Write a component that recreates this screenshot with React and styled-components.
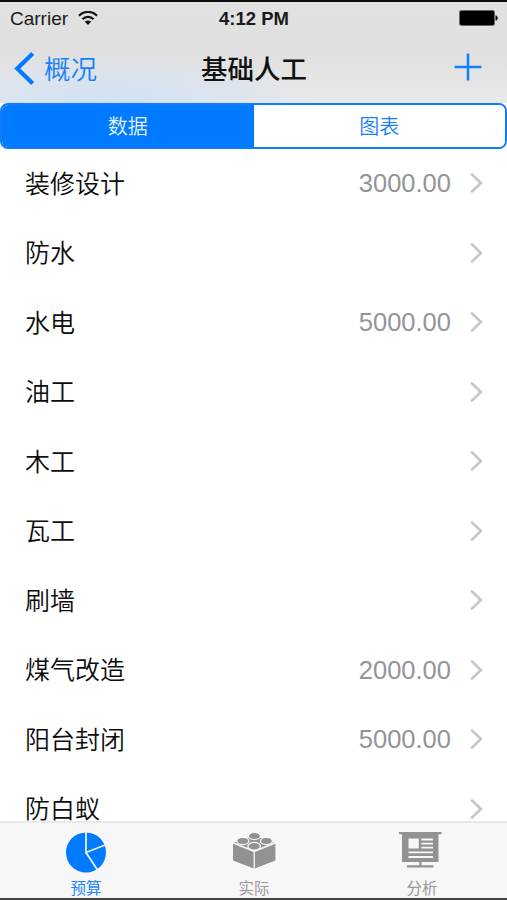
import React, { useState } from "react";
import styled, { createGlobalStyle } from "styled-components";

const GlobalStyle = createGlobalStyle`
  * {
    box-sizing: border-box;
  }

  body {
    margin: 0;
    background: #fff;
    font-family: "Liberation Sans", "Noto Sans CJK SC", sans-serif;
  }

  button {
    font-family: inherit;
    border: none;
    background: none;
    padding: 0;
    cursor: pointer;
  }
`;

const Screen = styled.div`
  width: 507px;
  height: 900px;
  display: flex;
  flex-direction: column;
  overflow: hidden;
  background: #fff;
  border-top: 2px solid #0c0c0c;
  border-bottom: 2px solid #444;
`;

const Header = styled.header`
  flex: none;
  height: 101px;
  background: radial-gradient(ellipse 210px 50px at 110px 101px, #cfe1f6 0%, rgba(207, 225, 246, 0) 100%),
    linear-gradient(#e1e1e1 0%, #e0e0e0 50%, #e9e9eb 100%);
`;

const StatusBar = styled.div`
  height: 33px;
  padding: 1px 9px 0 10px;
  display: grid;
  grid-template-columns: 1fr auto 1fr;
  align-items: center;
  font-size: 19px;
  line-height: 32px;
  color: #1a1a1a;
`;

const Carrier = styled.div`
  display: flex;
  align-items: center;
  gap: 10px;
`;

const Time = styled.div`
  font-size: 18.5px;
  font-weight: bold;
`;

const BatterySlot = styled.div`
  display: flex;
  justify-content: flex-end;
  margin-bottom: 2px;
`;

const NavBar = styled.div`
  height: 66px;
  padding: 0 25px 0 14px;
  display: grid;
  grid-template-columns: 1fr auto 1fr;
  align-items: center;
`;

const BackButton = styled.button`
  display: flex;
  align-items: center;
  gap: 9px;
  font-size: 26.5px;
  line-height: 40px;
  font-weight: 350;
  color: #1580fb;

  span {
    padding-top: 3px;
  }
`;

const Title = styled.h1`
  margin: 0 0 0 12px;
  padding-top: 4px;
  font-size: 26.5px;
  line-height: 40px;
  font-weight: 500;
  color: #111;
`;

const AddButton = styled.button`
  justify-self: end;
  display: flex;
  margin-bottom: 3px;
`;

const Segments = styled.div`
  flex: none;
  height: 46px;
  display: flex;
  border: 2px solid #0e7dfb;
  border-radius: 8px;
  overflow: hidden;
  background: #fff;
`;

const Segment = styled.button`
  flex: 1;
  padding-top: 2px;
  font-size: 20px;
  line-height: 40px;
  font-weight: 350;
  color: ${(props) => (props.$active ? "#e4f1ff" : "#1580fb")};
  background: ${(props) => (props.$active ? "#007aff" : "#fff")};
`;

const List = styled.ul`
  flex: 1;
  min-height: 0;
  margin: 0;
  padding: 0;
  list-style: none;
  overflow: hidden;
`;

const Row = styled.li`
  height: 69.5px;
  padding: 0 24px 1px 25px;
  display: flex;
  align-items: center;
`;

const Name = styled.span`
  flex: 1;
  padding-top: 1px;
  font-size: 25px;
  line-height: 36px;
  font-weight: 350;
  color: #0c0c0c;
`;

const Amount = styled.span`
  margin-right: 19px;
  font-size: 25.5px;
  line-height: 36px;
  color: #949498;
`;

const TabBar = styled.nav`
  flex: none;
  height: 77px;
  display: flex;
  justify-content: space-between;
  padding: 0 1px 0 2px;
  border-top: 2px solid #e9e9e9;
  background: #f7f7f7;
`;

const Tab = styled.button`
  width: 168px;
  display: flex;
  flex-direction: column;
  align-items: center;
  padding-top: 9px;
  font-size: 15.5px;
  line-height: 18px;
  color: ${(props) => (props.$active ? "#1d86fb" : "#989898")};
`;

const TabIcon = styled.span`
  height: 48px;
  display: flex;
`;

const WifiIcon = () => (
  <svg width="20" height="16" viewBox="0 0 20 16" fill="none" stroke="#111" strokeWidth="2.3">
    <path d="M1 4.7a12.7 12.7 0 0 1 18 0" />
    <path d="M4.5 8.2a7.8 7.8 0 0 1 11 0" />
    <path d="M10 14l-3.2-3.3a4.6 4.6 0 0 1 6.4 0z" fill="#111" stroke="none" />
  </svg>
);

const BatteryIcon = () => (
  <svg width="39" height="16" viewBox="0 0 39 16">
    <rect x="0.5" y="0.5" width="35" height="15" rx="2" fill="#000" stroke="#666" strokeWidth="1" />
    <path d="M36.5 5.2c3 .6 3 5 0 5.6z" fill="#111" />
  </svg>
);

const BackIcon = () => (
  <svg width="21" height="33" viewBox="0 0 21 33" fill="none" stroke="#007aff" strokeWidth="4.2">
    <path d="M18.7 1.6L3.3 16.5l15.4 14.9" />
  </svg>
);

const PlusIcon = () => (
  <svg width="28" height="28" viewBox="0 0 28 28" stroke="#1580fb" strokeWidth="2.6">
    <path d="M14 0.5v27M0.5 14h27" />
  </svg>
);

const ChevronIcon = () => (
  <svg width="13" height="22" viewBox="0 0 13 22" fill="none" stroke="#c6c6cb" strokeWidth="2.7">
    <path d="M1.2 1.6l9.7 9.4-9.7 9.4" />
  </svg>
);

const PieIcon = () => (
  <svg width="40" height="41" viewBox="0 0 40 41">
    <circle cx="20" cy="20.5" r="20" fill="#007aff" />
    <path d="M20 0v20.5L39 13M20 20.5L31.5 38" fill="none" stroke="#e6f2ff" strokeWidth="1.8" />
  </svg>
);

const BrickIcon = () => (
  <svg width="44" height="37" viewBox="0 0 44 37" fill="#929292">
    <path d="M1 11.8L21.6 20V36.4L1 28.4z" />
    <path d="M43.4 11.8L22.9 20V36.4L43.4 28.4z" />
    <path d="M2.4 10.6L22.2 3.6l19.8 7-19.8 8z" />
    <g stroke="#f7f7f7" strokeWidth="1.3">
      <ellipse cx="22.3" cy="4" rx="6" ry="3.6" />
      <ellipse cx="10.8" cy="9" rx="6" ry="3.6" />
      <ellipse cx="34.4" cy="9" rx="6" ry="3.6" />
      <ellipse cx="22.2" cy="14.2" rx="6.3" ry="3.9" />
    </g>
  </svg>
);

const BoardIcon = () => (
  <svg width="46" height="37" viewBox="0 0 46 37" fill="#929292">
    <path d="M0 0h42.5v2.3H0zM3 2h36.5v28H3zM20.3 30h2.2v4h-2.2zM8 33.2h26.5v2.2H8z" />
    <path
      d="M9.5 6.5h10.3v10H9.5zM22.3 6.5H34v2H22.3zM22.3 10.7H34v1.8H22.3zM22.3 14.7H34v1.8H22.3zM9.5 19.4H34v1.8H9.5zM9.5 24H34v2H9.5z"
      fill="#f7f7f7"
    />
  </svg>
);

const items = [
  { name: "装修设计", amount: "3000.00" },
  { name: "防水" },
  { name: "水电", amount: "5000.00" },
  { name: "油工" },
  { name: "木工" },
  { name: "瓦工" },
  { name: "刷墙" },
  { name: "煤气改造", amount: "2000.00" },
  { name: "阳台封闭", amount: "5000.00" },
  { name: "防白蚁" },
];

const tabs = [
  { label: "预算", Icon: PieIcon },
  { label: "实际", Icon: BrickIcon },
  { label: "分析", Icon: BoardIcon },
];

const App = () => {
  const [segment, setSegment] = useState("数据");
  const [tab, setTab] = useState("预算");

  return (
    <Screen>
      <GlobalStyle />
      <Header>
        <StatusBar>
          <Carrier>
            Carrier
            <WifiIcon />
          </Carrier>
          <Time>4:12 PM</Time>
          <BatterySlot>
            <BatteryIcon />
          </BatterySlot>
        </StatusBar>
        <NavBar>
          <BackButton>
            <BackIcon />
            <span>概况</span>
          </BackButton>
          <Title>基础人工</Title>
          <AddButton>
            <PlusIcon />
          </AddButton>
        </NavBar>
      </Header>
      <Segments>
        {["数据", "图表"].map((label) => (
          <Segment key={label} $active={segment === label} onClick={() => setSegment(label)}>
            {label}
          </Segment>
        ))}
      </Segments>
      <List>
        {items.map((item) => (
          <Row key={item.name}>
            <Name>{item.name}</Name>
            {item.amount && <Amount>{item.amount}</Amount>}
            <ChevronIcon />
          </Row>
        ))}
      </List>
      <TabBar>
        {tabs.map(({ label, Icon }) => (
          <Tab key={label} $active={tab === label} onClick={() => setTab(label)}>
            <TabIcon>
              <Icon />
            </TabIcon>
            {label}
          </Tab>
        ))}
      </TabBar>
    </Screen>
  );
};

export default App;
